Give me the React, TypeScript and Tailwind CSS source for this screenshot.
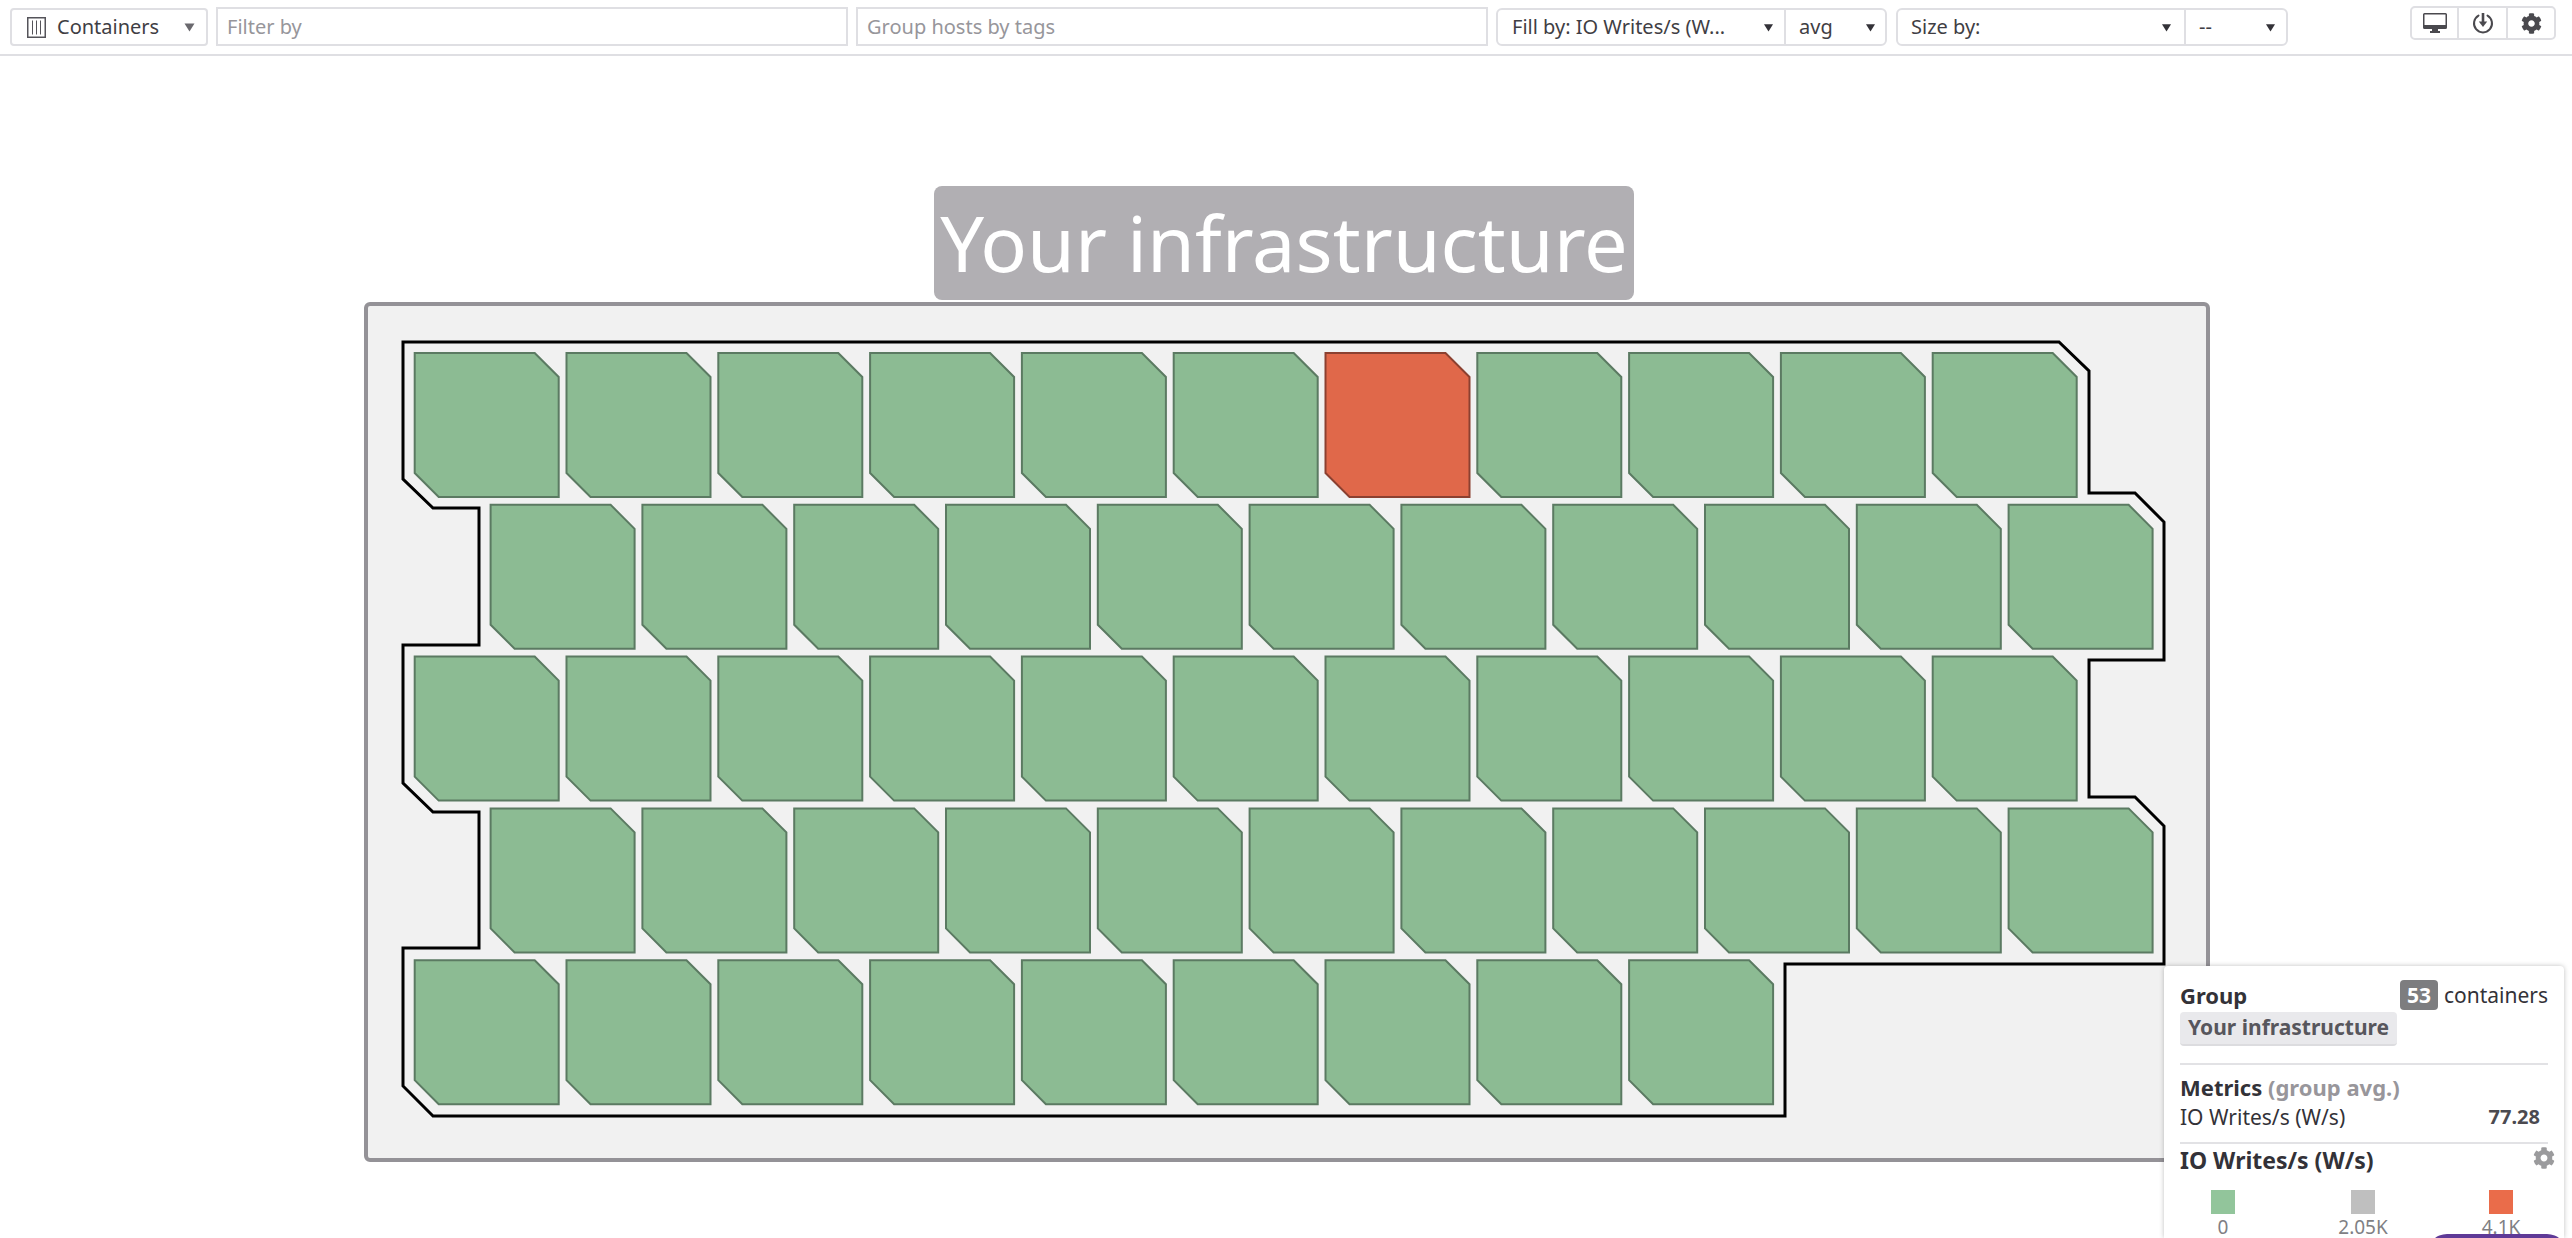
import React from "react";
import { FaCog } from "react-icons/fa";

const PITCH = 151.8;
const Y0 = 353;
const X0 = 414.700;
const SIZE = 144;
const CUT = 24;

const hexPoints = (x: number, y: number) =>
  [
    [x, y],
    [x + SIZE - CUT, y],
    [x + SIZE, y + CUT],
    [x + SIZE, y + SIZE],
    [x + CUT, y + SIZE],
    [x, y + SIZE - CUT],
  ]
    .map((p) => p.join(","))
    .join(" ");

const rows = [
  { count: 11, offset: 0 },
  { count: 11, offset: 75.9 },
  { count: 11, offset: 0 },
  { count: 11, offset: 75.9 },
  { count: 9, offset: 0 },
];

const outline =
  "403,342 2059,342 2089,371 2089,493 2135,493 2164,522 2164,660 2089,660 2089,797 2135,797 2164,826 2164,964 1785,964 1785,1116 433,1116 403,1086 403,948 479,948 479,812 433,812 403,783 403,645 479,645 479,508 433,508 403,479";

function Caret({ className }: { className: string }) {
  return (
    <svg viewBox="0 0 10 10" className={className} aria-hidden="true">
      <path d="M0 1.5h10L5 9.5z" fill="currentColor" />
    </svg>
  );
}

function SelectCell({ label, className, caret }: { label: string; className: string; caret: string }) {
  return (
    <div className={`flex items-center justify-between text-[20px] text-[#3f3e44] ${className}`}>
      <span className="whitespace-nowrap">{label}</span>
      <Caret className={caret} />
    </div>
  );
}

export default function App() {
  return (
    <div className="relative h-[1238px] w-[2572px] overflow-hidden bg-white font-['Noto_Sans',sans-serif]">
      <header className="flex h-[56px] items-start border-b-2 border-[#dfdfe3]">
        <div className="ml-[10px] mt-[8px] flex h-[38px] w-[198px] items-center rounded-[4px] border-2 border-[#dfdfe3] pl-[15px] pr-[10px] text-[20px] text-[#3f3e44]">
          <svg viewBox="0 0 19 21" className="h-[21px] w-[19px] shrink-0 text-[#55545a]" fill="none" stroke="currentColor">
            <rect x="0.75" y="0.75" width="17.5" height="19.5" strokeWidth="1.5" />
            <path d="M5.5 3.5v14M9.5 3.5v14M13.5 3.5v14" strokeWidth="1" />
          </svg>
          <span className="ml-[11px]">Containers</span>
          <Caret className="ml-auto h-[10px] w-[13px] text-[#6a696e]" />
        </div>
        <div className="ml-[8px] mt-[7px] flex h-[39px] w-[632px] items-center border-2 border-[#dfdfe3] pl-[9px] text-[20px] text-[#97969b]">
          Filter by
        </div>
        <div className="ml-[8px] mt-[7px] flex h-[39px] w-[632px] items-center border-2 border-[#dfdfe3] pl-[9px] text-[20px] text-[#97969b]">
          Group hosts by tags
        </div>
        <div className="ml-[8px] mt-[8px] flex h-[38px] w-[391px] rounded-[6px] border-2 border-[#dfdfe3]">
          <SelectCell label="Fill by: IO Writes/s (W..." className="w-[288px] border-r-2 border-[#dfdfe3] pl-[14px] pr-[11px]" caret="h-[11px] w-[9px] text-[#333238]" />
          <SelectCell label="avg" className="flex-1 pl-[13px] pr-[10px]" caret="h-[11px] w-[9px] text-[#333238]" />
        </div>
        <div className="ml-[9px] mt-[8px] flex h-[38px] w-[392px] rounded-[6px] border-2 border-[#dfdfe3]">
          <SelectCell label="Size by:" className="w-[288px] border-r-2 border-[#dfdfe3] pl-[13px] pr-[13px]" caret="h-[11px] w-[9px] text-[#333238]" />
          <SelectCell label="--" className="flex-1 pl-[13px] pr-[11px]" caret="h-[11px] w-[9px] text-[#333238]" />
        </div>
        <div className="ml-[122px] mt-[6px] flex h-[34px] w-[146px] rounded-[5px] border-2 border-[#dfdfe3] text-[#4a494e]">
          <div className="flex w-[47px] items-center justify-center border-r-2 border-[#dfdfe3]">
            <svg viewBox="0 0 24 20" className="h-[20px] w-[24px]" fill="currentColor">
              <path d="M1.5 0h21A1.5 1.5 0 0 1 24 1.5v13a1.5 1.5 0 0 1-1.5 1.5h-21A1.5 1.5 0 0 1 0 14.500v-13A1.500 1.500 0 0 1 1.500 0zM1.500 1.500V12h21V1.500z" fillRule="evenodd" />
              <path d="M9 16h6v2h2v2H7v-2h2z" />
            </svg>
          </div>
          <div className="flex w-[49px] items-center justify-center border-r-2 border-[#dfdfe3]">
            <svg viewBox="0 0 22 22" className="h-[22px] w-[22px]" fill="none" stroke="currentColor">
              <path d="M6.500 3.600a9 9 0 1 0 9 0" strokeWidth="2" strokeLinecap="round" />
              <path d="M11 1v10" strokeWidth="2.600" />
              <path d="M6.800 9.500h8.400L11 15z" fill="currentColor" stroke="none" />
            </svg>
          </div>
          <div className="flex flex-1 items-center justify-center">
            <FaCog className="h-[21px] w-[21px]" />
          </div>
        </div>
      </header>

      <main>
        <div className="ml-[934px] mt-[130px] flex h-[114px] w-[700px] items-center justify-center whitespace-nowrap rounded-[8px] bg-[#b1afb3] text-[77.500px] leading-none text-white">
          Your infrastructure
        </div>
        <div className="ml-[364px] mt-[2px] h-[860px] w-[1846px] rounded-[6px] border-4 border-[#949297] bg-[#f1f1f1]">
          <svg viewBox="368 306 1838 852" className="block h-[852px] w-[1838px]">
            <polygon points={outline} fill="none" stroke="#000" strokeWidth="3" />
            {rows.map((row, r) =>
              Array.from({ length: row.count }).map((_, c) => {
                const red = r === 0 && c === 6;
                return (
                  <polygon
                    key={`${r}-${c}`}
                    points={hexPoints(X0 + row.offset + c * PITCH, Y0 + r * PITCH)}
                    fill={red ? "#e0684a" : "#8cbb93"}
                    stroke={red ? "#8b4030" : "#5b7a62"}
                    strokeWidth="2"
                  />
                );
              })
            )}
          </svg>
        </div>
      </main>

      <aside className="absolute right-[8px] top-[966px] h-[272px] w-[400px] overflow-hidden rounded-t-[4px] bg-white px-[16px] text-[#333238] shadow-[0_0_5px_rgba(0,0,0,0.25)]">
        <div className="relative h-[97px]">
          <span className="absolute left-0 top-[14px] text-[22px] font-bold leading-[30px]">Group</span>
          <div className="absolute right-0 top-[14px] flex items-center text-[21px] leading-[30px]">
            <span className="mr-[6px] flex h-[30px] w-[38px] items-center justify-center rounded-[4px] bg-[#7d7d7f] font-bold text-white">53</span>
            containers
          </div>
          <span className="absolute left-0 top-[46px] flex h-[34px] items-center rounded-[4px] border-b-2 border-[#dcdcdf] bg-[#e9e9ec] px-[8px] text-[21px] font-bold text-[#57565c]">
            Your infrastructure
          </span>
        </div>
        <div className="h-[79px] border-t-2 border-[#e2e2e5] pt-[7px]">
          <div className="text-[22px] font-bold leading-[30px]">
            Metrics <span className="text-[#98969b]">(group avg.)</span>
          </div>
          <div className="flex items-center justify-between pr-[8px] text-[21px] leading-[30px]">
            <span>IO Writes/s (W/s)</span>
            <span className="text-[20px] font-bold text-[#4b4a50]">77.28</span>
          </div>
        </div>
        <div className="relative border-t-2 border-[#e2e2e5]">
          <div className="pt-[1px] text-[23px] font-bold leading-[30px]">IO Writes/s (W/s)</div>
          <FaCog className="absolute right-[-7px] top-[3px] h-[22px] w-[22px] text-[#9b9b9d]" />
          <div className="mt-[15px] flex text-[19px] leading-[24px] text-[#807f84]">
            <div className="ml-[11px] flex w-[64px] flex-col items-center">
              <span className="h-[24px] w-[24px] bg-[#92c59b]" />
              <span className="translate-y-[1px]">0</span>
            </div>
            <div className="ml-[76px] flex w-[64px] flex-col items-center">
              <span className="h-[24px] w-[24px] bg-[#bfbfbf]" />
              <span className="translate-y-[1px]">2.05K</span>
            </div>
            <div className="ml-[74px] flex w-[64px] flex-col items-center">
              <span className="h-[24px] w-[24px] bg-[#ea6c4a]" />
              <span className="translate-y-[1px]">4.1K</span>
            </div>
          </div>
        </div>
      </aside>
      <div className="absolute left-[2427px] top-[1234px] h-[40px] w-[140px] rounded-[24px] bg-[#5f3a97]" />
    </div>
  );
}
